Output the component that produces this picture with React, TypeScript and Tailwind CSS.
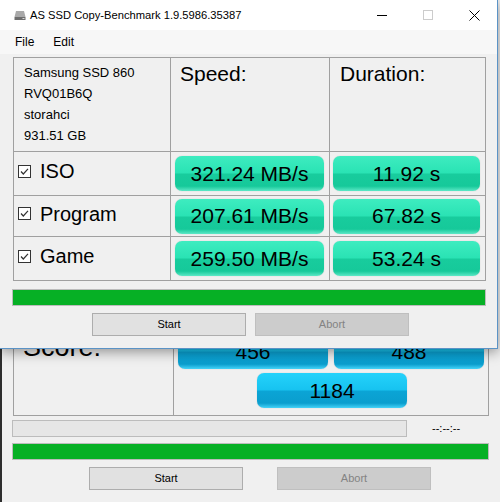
import type { ReactNode } from "react";

const sans = "font-['Liberation_Sans',Arial,sans-serif]";

type Tone = "green" | "blue";

const toneClass: Record<Tone, string> = {
  green:
    "bg-[linear-gradient(180deg,#3eecc0_0%,#2ae3b4_48%,#18cc9d_52%,#16c99a_86%,#5ce8c6_100%)]",
  blue: "bg-[linear-gradient(180deg,#25d2fb_0%,#17c3f0_48%,#0ba4d5_52%,#0a9ece_86%,#44d3f8_100%)]",
};

function GlossBox({ tone, children, className = "" }: { tone: Tone; children: ReactNode; className?: string }) {
  return (
    <div
      className={`${toneClass[tone]} ${className} h-[35px] rounded-[7px] flex items-center justify-center text-[21px] text-black shadow-[0_0_1px_rgba(0,0,0,0.25)]`}
    >
      {children}
    </div>
  );
}

function Check() {
  return (
    <svg width="13" height="13" viewBox="0 0 13 13" className="shrink-0">
      <rect x="0.5" y="0.5" width="12" height="12" fill="#ffffff" stroke="#333333" />
      <path d="M3 6.5 L5.3 9 L10 3.8" fill="none" stroke="#333333" strokeWidth="1.2" />
    </svg>
  );
}

function Button({ label, disabled = false }: { label: string; disabled?: boolean }) {
  return (
    <div
      className={`w-[154px] h-[23px] flex items-center justify-center text-[11px] border ${
        disabled ? "bg-[#cccccc] border-[#bfbfbf] text-[#838383]" : "bg-[#e1e1e1] border-[#adadad] text-black"
      }`}
    >
      {label}
    </div>
  );
}

function DriveIcon() {
  return (
    <svg width="12" height="12" viewBox="0 0 12 12">
      <path d="M2 2 H10 L11.5 8 H0.5 Z" fill="#a9a9a9" />
      <rect x="0.5" y="8" width="11" height="3" fill="#6e6e6e" />
      <rect x="8.5" y="9" width="2" height="1" fill="#d8d8d8" />
    </svg>
  );
}

const tests = [
  { name: "ISO", speed: "321.24 MB/s", time: "11.92 s" },
  { name: "Program", speed: "207.61 MB/s", time: "67.82 s" },
  { name: "Game", speed: "259.50 MB/s", time: "53.24 s" },
];

const rowHeights = ["h-[43px]", "h-[40px]", "h-[43px]"];

// main benchmark window, mostly covered by the copy dialog
function MainWindow() {
  return (
    <div className="absolute inset-0 bg-[#f0f0f0] border-l-2 border-[#2e2e2e] px-[10px]">
      <div className="h-[300px]" />
      <div className="ml-[1px] w-[476px] border border-[#a0a0a0] grid grid-cols-[159px_314px] gap-x-px bg-[#a0a0a0]">
        <div className="bg-[#f0f0f0] h-[114px] pl-[9px] pt-[31px] text-[27px] leading-[31px]">Score:</div>
        <div className="bg-[#f0f0f0] h-[114px] pt-[33px] px-[4px] flex flex-col gap-[4px]">
          <div className="flex gap-[6px]">
            <GlossBox tone="blue" className="w-[150px]">456</GlossBox>
            <GlossBox tone="blue" className="w-[150px]">488</GlossBox>
          </div>
          <GlossBox tone="blue" className="w-[150px] ml-[79px]">1184</GlossBox>
        </div>
      </div>
      <div className="mt-[4px] flex items-center">
        <div className="w-[395px] h-[17px] bg-[#e6e6e6] border border-[#bcbcbc]" />
        <span className="ml-[25px] text-[11px] leading-none">--:--:--</span>
      </div>
      <div className="mt-[6px] w-[477px] h-[17px] bg-[#06b025] border border-[#bcbcbc]" />
      <div className="mt-[7px] flex pl-[77px] gap-[34px]">
        <Button label="Start" />
        <Button label="Abort" disabled />
      </div>
    </div>
  );
}

function CopyDialog() {
  return (
    <div className="absolute left-0 top-0 w-[498px] h-[349px] bg-[#f0f0f0] border-r border-b border-[#5b93c6] shadow-[0_3px_12px_rgba(0,0,0,0.4)] flex flex-col">
      <div className="h-[30px] bg-white flex items-center">
        <div className="ml-[14px] mr-[4px] flex">
          <DriveIcon />
        </div>
        <span className="text-[11.2px] text-black">AS SSD Copy-Benchmark 1.9.5986.35387</span>
        <div className="ml-auto flex h-full">
          <div className="w-[46px] flex items-center justify-center">
            <div className="w-[10px] h-px bg-black" />
          </div>
          <div className="w-[46px] flex items-center justify-center">
            <div className="w-[10px] h-[10px] border border-[#cccccc]" />
          </div>
          <div className="w-[46px] flex items-center justify-center">
            <svg width="11" height="11" viewBox="0 0 11 11">
              <path d="M0.5 0.5 L10.5 10.5 M10.5 0.5 L0.5 10.5" stroke="#000" strokeWidth="1" />
            </svg>
          </div>
        </div>
      </div>
      <div className="h-[24px] bg-[#f7f7f7] flex items-center text-[12px] pl-[15px] gap-[19px]">
        <span>File</span>
        <span>Edit</span>
      </div>
      <div className="pt-[3px] px-[12px]">
        <div className="ml-[1px] w-[473px] border border-[#a0a0a0] grid grid-cols-[156px_158px_155px] gap-px bg-[#a0a0a0]">
          <div className="bg-[#f0f0f0] h-[93px] pl-[10px] pt-[4px] text-[13px] leading-[21px]">
            <div>Samsung SSD 860</div>
            <div>RVQ01B6Q</div>
            <div>storahci</div>
            <div>931.51 GB</div>
          </div>
          <div className="bg-[#f0f0f0] pl-[9px] pt-[4px] text-[21px] leading-[24px]">Speed:</div>
          <div className="bg-[#f0f0f0] pl-[10px] pt-[4px] text-[21px] leading-[24px]">Duration:</div>
          {tests.map((t, i) => (
            <div key={t.name} className="contents">
              <div className={`bg-[#f0f0f0] ${rowHeights[i]} flex items-center pl-[4px] pb-[5px] gap-[9px] text-[20px]`}>
                <Check />
                <span className="leading-none">{t.name}</span>
              </div>
              <div className={`bg-[#f0f0f0] ${rowHeights[i]} flex items-center pl-[4px] pr-[5px]`}>
                <GlossBox tone="green" className="flex-1">
                  {t.speed}
                </GlossBox>
              </div>
              <div className={`bg-[#f0f0f0] ${rowHeights[i]} flex items-center pl-[3px] pr-[5px]`}>
                <GlossBox tone="green" className="flex-1">
                  {t.time}
                </GlossBox>
              </div>
            </div>
          ))}
        </div>
        <div className="mt-[8px] w-[474px] h-[17px] bg-[#06b025] border border-[#bcbcbc]" />
        <div className="mt-[7px] flex pl-[80px] gap-[9px]">
          <Button label="Start" />
          <Button label="Abort" disabled />
        </div>
      </div>
    </div>
  );
}

export default function App() {
  return (
    <div className={`relative w-[500px] h-[502px] overflow-hidden bg-[#f0f0f0] text-black ${sans}`}>
      <MainWindow />
      <CopyDialog />
    </div>
  );
}
